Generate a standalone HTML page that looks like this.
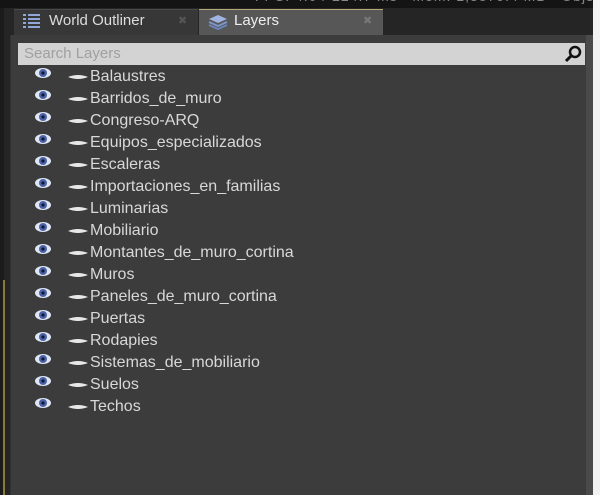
<!DOCTYPE html>
<html><head><style>
body{margin:0;width:600px;height:495px;background:#252525;position:relative;overflow:hidden;font-family:"Liberation Sans",sans-serif}
.abs{position:absolute}
.row{position:absolute;left:0;height:22px;font-size:16px;color:#d8d8d8;line-height:22px}
</style></head><body>
<div class="abs" style="left:0;top:0;width:600px;height:8px;background:#141414;overflow:hidden">
<div class="abs" style="left:255px;top:-12px;font-size:14px;color:#888;white-space:nowrap;letter-spacing:1px">FPS: 4.0 / 224.7 ms &nbsp; Mem: 1,3879.4 MB &nbsp; Objs: 39,756</div></div>
<div class="abs" style="left:0;top:8px;width:4px;height:487px;background:#1b1b1b"></div>
<div class="abs" style="left:3px;top:280px;width:2px;height:215px;background:#8a7a3a"></div>
<div class="abs" style="left:14px;top:9px;width:184px;height:27px;background:#373737;border-top:1px solid #4a4a4a"></div>
<svg class="abs" style="left:22px;top:13px" width="20" height="18" viewBox="0 0 20 18"><g fill="#8fa8d8"><rect x="1" y="1" width="3" height="2"/><rect x="6" y="1" width="12" height="2"/><rect x="1" y="5" width="3" height="2"/><rect x="6" y="5" width="12" height="2"/><rect x="1" y="9" width="3" height="2"/><rect x="6" y="9" width="12" height="2"/><rect x="1" y="13" width="3" height="2"/><rect x="6" y="13" width="12" height="2"/></g></svg>
<div class="abs" style="left:49px;top:12px;font-size:15px;color:#ddd">World Outliner</div>
<div class="abs" style="left:178px;top:14px;font-size:11px;color:#555">✖</div>
<div class="abs" style="left:199px;top:9px;width:184px;height:27px;background:#575757;border-top:1px solid #b5a975"></div>
<svg class="abs" style="left:207px;top:13px" width="22" height="18" viewBox="0 0 22 18"><path d="M2 6 L11 2 L20 6 L11 10Z" fill="#9fb4e0"/><path d="M2 9 L11 13 L20 9" stroke="#7d95c8" stroke-width="2" fill="none"/><path d="M2 12 L11 16 L20 12" stroke="#6b84b8" stroke-width="2" fill="none"/></svg>
<div class="abs" style="left:234px;top:12px;font-size:15px;color:#eee">Layers</div>
<div class="abs" style="left:363px;top:14px;font-size:11px;color:#777">✖</div>
<div class="abs" style="left:10px;top:35px;width:582px;height:460px;background:#3c3c3c;border-left:1px solid #333"></div>
<div class="abs" style="left:586px;top:35px;width:7px;height:460px;background:#4a4a4a"></div>
<div class="abs" style="left:593px;top:0;width:7px;height:495px;background:#f2f2f2"></div>
<div class="abs" style="left:18px;top:43px;width:567px;height:22px;background:#d3d3d3"></div>
<div class="abs" style="left:24px;top:45px;font-size:15px;color:#a0a0a0">Search Layers</div>
<svg class="abs" style="left:564px;top:45px" width="20" height="18" viewBox="0 0 20 18"><circle cx="11" cy="7" r="5" stroke="#111" stroke-width="2.5" fill="none"/><path d="M7 11 L2 16" stroke="#111" stroke-width="3"/></svg>
<div id="rows"></div>
<script>
var n=["Balaustres","Barridos_de_muro","Congreso-ARQ","Equipos_especializados","Escaleras","Importaciones_en_familias","Luminarias","Mobiliario","Montantes_de_muro_cortina","Muros","Paneles_de_muro_cortina","Puertas","Rodapies","Sistemas_de_mobiliario","Suelos","Techos"];
var h="";n.forEach(function(t,i){var y=66+i*22;
h+='<svg class="abs" style="left:34px;top:'+(y+1)+'px" width="18" height="12" viewBox="0 0 18 12"><ellipse cx="9" cy="6" rx="8" ry="5" fill="#dfe6f5"/><circle cx="9" cy="6" r="4" fill="#4c64a6"/><circle cx="9" cy="6" r="1.6" fill="#111a33"/></svg>';
h+='<svg class="abs" style="left:68px;top:'+(y+8)+'px" width="20" height="6" viewBox="0 0 20 6"><path d="M0 3 Q10 -1 20 3 Q10 7 0 3Z" fill="#e8e8e8"/></svg>';
h+='<div class="row" style="left:90px;top:'+y+'px">'+t+'</div>';});
document.getElementById("rows").innerHTML=h;
</script>
</body></html>
